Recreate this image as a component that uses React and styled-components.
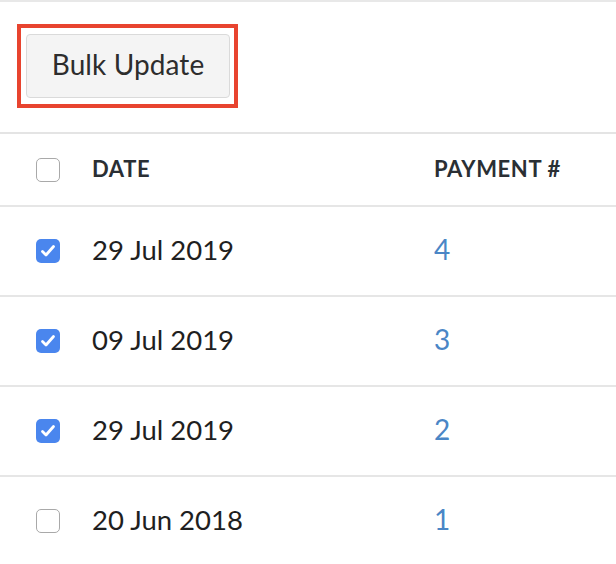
import React from "react";
import styled, { createGlobalStyle } from "styled-components";

const GlobalStyle = createGlobalStyle`
  body {
    margin: 0;
    background: #fff;
    font-family: Lato, "Open Sans", sans-serif;
  }
`;

const Page = styled.div`
  width: 616px;
  border-top: 2px solid #e8e8e8;
`;

const Toolbar = styled.div`
  padding: 22px 0 24px 17px;
  border-bottom: 2px solid #e4e4e4;
`;

const Highlight = styled.div`
  display: inline-block;
  border: 4px solid #e8442f;
  padding: 6px 4px 6px 5px;
`;

const Button = styled.button`
  display: block;
  width: 204px;
  height: 64px;
  background: #f4f4f4;
  border: 1px solid #dadada;
  border-radius: 4px;
  font-family: Lato, "Open Sans", sans-serif;
  font-size: 28px;
  color: #2d2d2d;
  padding: 0 0 4px;
  letter-spacing: 0.1px;
`;

const Row = styled.div`
  display: grid;
  grid-template-columns: 56px 342px 1fr;
  align-items: center;
  padding-left: 36px;
  height: ${(p) => (p.$head ? "71px" : "88px")};
  border-bottom: 2px solid #e6e6e6;
`;

const HeadCell = styled.div`
  font-size: 22px;
  font-weight: 700;
  color: #2a2f34;
  text-transform: uppercase;
  letter-spacing: 0.6px;
  margin-top: -2px;
`;

const DateCell = styled.div`
  font-size: 27.5px;
  color: #1f1f1f;
  margin-top: -4px;
`;

const NumCell = styled.div`
  font-size: 28px;
  color: #4a86c6;
  margin-top: -4px;
`;

const Box = styled.span`
  display: flex;
  align-items: center;
  justify-content: center;
  width: 24px;
  height: 24px;
  box-sizing: border-box;
  border-radius: 5px;
  background: ${(p) => (p.$on ? "#4a86ee" : "#fff")};
  border: ${(p) => (p.$on ? "none" : "1px solid #a9a9a9")};
`;

const Check = ({ on }) => (
  <Box $on={on}>
    {on && (
      <svg width="16" height="14" viewBox="0 0 16 14">
        <path d="M2.5 7.5 L6 11 L13.5 2.5" fill="none" stroke="#fff" strokeWidth="2.8" strokeLinecap="round" strokeLinejoin="round" />
      </svg>
    )}
  </Box>
);

const rows = [
  { date: "29 Jul 2019", num: 4, on: true },
  { date: "09 Jul 2019", num: 3, on: true },
  { date: "29 Jul 2019", num: 2, on: true },
  { date: "20 Jun 2018", num: 1, on: false },
];

export default function App() {
  return (
    <Page>
      <GlobalStyle />
      <Toolbar>
        <Highlight>
          <Button>Bulk Update</Button>
        </Highlight>
      </Toolbar>
      <Row $head>
        <Check on={false} />
        <HeadCell>Date</HeadCell>
        <HeadCell>Payment #</HeadCell>
      </Row>
      {rows.map((r, i) => (
        <Row key={i}>
          <Check on={r.on} />
          <DateCell>{r.date}</DateCell>
          <NumCell>{r.num}</NumCell>
        </Row>
      ))}
    </Page>
  );
}
